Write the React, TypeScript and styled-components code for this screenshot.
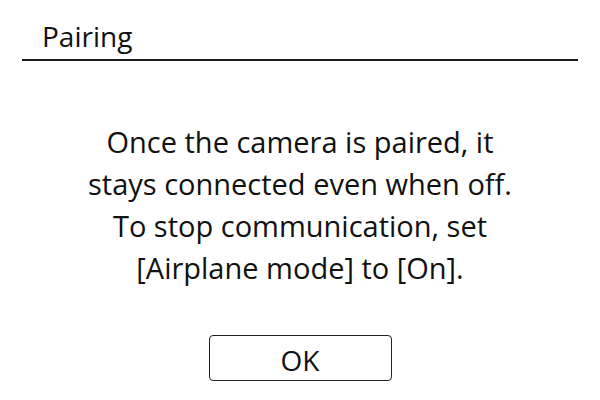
import React from "react";
import styled, { createGlobalStyle } from "styled-components";

const GlobalStyle = createGlobalStyle`
  html, body {
    margin: 0;
    padding: 0;
    background: #ffffff;
  }
  body {
    font-family: "Open Sans", "Noto Sans", sans-serif;
    color: #111111;
  }
`;

const MESSAGE = [
  "Once the camera is paired, it",
  "stays connected even when off.",
  "To stop communication, set",
  "[Airplane mode] to [On].",
];

const App: React.FC = () => {
  return (
    <>
      <GlobalStyle />
      <Screen>
        <Header>
          <Title>Pairing</Title>
        </Header>
        <Message>
          {MESSAGE.map((line, idx) => (
            <Line key={idx}>{line}</Line>
          ))}
        </Message>
        <Footer>
          <OkButton>OK</OkButton>
        </Footer>
      </Screen>
    </>
  );
};

export default App;

const Screen = styled.div`
  width: 600px;
  height: 400px;
  display: flex;
  flex-direction: column;
  box-sizing: border-box;
`;

const Header = styled.header`
  margin: 0 22px;
  padding: 21px 0 0 20px;
  height: 61px;
  box-sizing: border-box;
  border-bottom: 2px solid #1a1a1a;
`;

const Title = styled.h1`
  margin: 0;
  font-size: 28px;
  font-weight: 400;
  line-height: 30px;
`;

const Message = styled.div`
  margin-top: 60px;
  display: flex;
  flex-direction: column;
  align-items: center;
`;

const Line = styled.div`
  font-size: 29px;
  line-height: 42px;
  text-align: center;
  white-space: nowrap;
`;

const Footer = styled.div`
  margin-top: 46px;
  display: flex;
  justify-content: center;
`;

const OkButton = styled.button`
  width: 183px;
  height: 46px;
  box-sizing: border-box;
  display: flex;
  align-items: center;
  justify-content: center;
  background: #ffffff;
  border: 1.5px solid #222222;
  border-radius: 4px;
  font-family: "Open Sans", "Noto Sans", sans-serif;
  font-size: 28px;
  color: #111111;
  padding: 3px 0 0;
  line-height: 1;
`;
